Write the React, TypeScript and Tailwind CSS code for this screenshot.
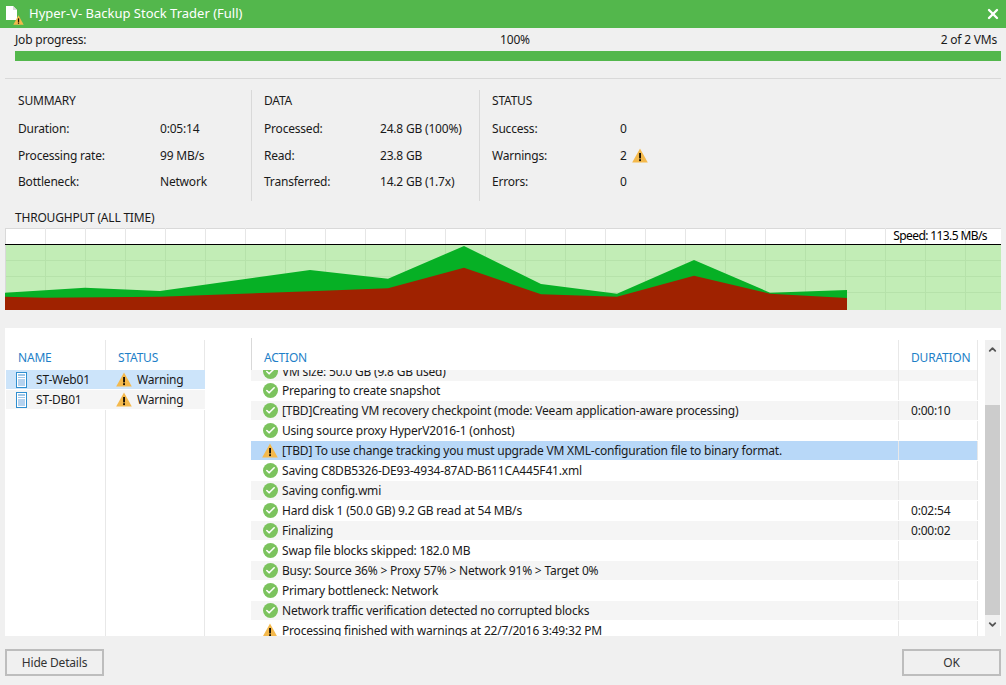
import { Check, ChevronDown, ChevronUp, X } from 'lucide-react';

const WarnIcon = ({ className = 'w-4 h-4' }: { className?: string }) => (
  <svg viewBox="0 0 16 15" className={className}>
    <path d="M8 0.5 L15.8 14.5 H0.2 Z" fill="#f4b94c" />
    <rect x="7.1" y="5" width="1.9" height="5.4" fill="#1a1205" />
    <rect x="7.1" y="11.2" width="1.9" height="1.9" fill="#1a1205" />
  </svg>
);

const OkIcon = () => (
  <span className="w-[15px] h-[15px] rounded-full bg-[#7cc35e] flex items-center justify-center shrink-0">
    <Check className="w-[11px] h-[11px] text-white" strokeWidth={3.5} />
  </span>
);

const VmIcon = () => (
  <svg viewBox="0 0 11 16" className="w-[11px] h-4 shrink-0">
    <rect x="0.5" y="0.5" width="10" height="15" fill="#fff" stroke="#2f8fd0" />
    <rect x="2" y="2" width="7" height="2" fill="#9fc6e8" />
    <rect x="2" y="5" width="7" height="1" fill="#9fc6e8" />
    <rect x="2" y="7" width="7" height="7" fill="#b5d2ee" />
  </svg>
);

const sections = [
  {
    title: 'SUMMARY',
    className: 'w-[246px] pl-[13px]',
    valueClass: 'w-[142px]',
    rows: [
      ['Duration:', '0:05:14'],
      ['Processing rate:', '99 MB/s'],
      ['Bottleneck:', 'Network'],
    ],
  },
  {
    title: 'DATA',
    className: 'w-[228px] pl-3 border-l border-[#d9d9d9]',
    valueClass: 'w-[116px]',
    rows: [
      ['Processed:', '24.8 GB (100%)'],
      ['Read:', '23.8 GB'],
      ['Transferred:', '14.2 GB (1.7x)'],
    ],
  },
  {
    title: 'STATUS',
    className: 'w-[228px] pl-3 border-l border-[#d9d9d9]',
    valueClass: 'w-[128px]',
    rows: [
      ['Success:', '0'],
      ['Warnings:', '2'],
      ['Errors:', '0'],
    ],
  },
];

const actions = [
  { text: 'VM size: 50.0 GB (9.8 GB used)', time: '', kind: 'ok', bg: 'bg-[#f5f5f5]' },
  { text: 'Preparing to create snapshot', time: '', kind: 'ok', bg: 'bg-white' },
  { text: '[TBD]Creating VM recovery checkpoint (mode: Veeam application-aware processing)', time: '0:00:10', kind: 'ok', bg: 'bg-[#f5f5f5]' },
  { text: 'Using source proxy HyperV2016-1 (onhost)', time: '', kind: 'ok', bg: 'bg-white' },
  { text: '[TBD] To use change tracking you must upgrade VM XML-configuration file to binary format.', time: '', kind: 'warn', bg: 'bg-[#b8d8f8]' },
  { text: 'Saving C8DB5326-DE93-4934-87AD-B611CA445F41.xml', time: '', kind: 'ok', bg: 'bg-white' },
  { text: 'Saving config.wmi', time: '', kind: 'ok', bg: 'bg-[#f5f5f5]' },
  { text: 'Hard disk 1 (50.0 GB) 9.2 GB read at 54 MB/s', time: '0:02:54', kind: 'ok', bg: 'bg-white' },
  { text: 'Finalizing', time: '0:00:02', kind: 'ok', bg: 'bg-[#f5f5f5]' },
  { text: 'Swap file blocks skipped: 182.0 MB', time: '', kind: 'ok', bg: 'bg-white' },
  { text: 'Busy: Source 36% > Proxy 57% > Network 91% > Target 0%', time: '', kind: 'ok', bg: 'bg-[#f5f5f5]' },
  { text: 'Primary bottleneck: Network', time: '', kind: 'ok', bg: 'bg-white' },
  { text: 'Network traffic verification detected no corrupted blocks', time: '', kind: 'ok', bg: 'bg-[#f5f5f5]' },
  { text: 'Processing finished with warnings at 22/7/2016 3:49:32 PM', time: '', kind: 'warn', bg: 'bg-white' },
];

const vLines = Array.from({ length: 24 }, (_, i) => 40 * (i + 1));

// chart coords are relative to the chart box (x - 5, y - 228)
const greenPts = '0,82 0,64.7 80,59.7 155,63 305,42 383,50.7 459,18 536,56 612,65.7 689,32 765,64.7 842,62 842,82';
const redPts = '0,82 0,68.7 40,69.7 155,68.7 305,63.3 383,60.3 459,39.7 536,66.3 612,68.7 689,47.7 765,65.7 842,70 842,82';

function Chart() {
  return (
    <div className="relative mx-[5px] h-[82px] bg-white">
      <svg viewBox="0 0 996 82" className="block w-[996px] h-[82px]">
        <rect x="0" y="16" width="996" height="66" fill="#c2edb6" />
        <rect x="0" y="0" width="996" height="1" fill="#d9d9d9" />
        {vLines.map((x) => (
          <g key={x}>
            <rect x={x} y="0" width="1" height="16" fill="#e6e6e6" />
            <rect x={x} y="16" width="1" height="66" fill="#b6e2aa" />
          </g>
        ))}
        {[32, 48, 64].map((y) => (
          <rect key={y} x="0" y={y} width="996" height="1" fill="#b6e2aa" />
        ))}
        <rect x="0" y="0" width="1" height="82" fill="#d9d9d9" />
        <polygon points={greenPts} fill="#06b025" />
        <polygon points={redPts} fill="#9f2200" />
        <rect x="0" y="16" width="996" height="1" fill="#000" />
      </svg>
      <span className="absolute right-[14px] top-0 h-4 leading-[16px] tracking-[-0.6px] text-black">Speed: 113.5 MB/s</span>
    </div>
  );
}

export default function App() {
  return (
    <div className="w-[1006px] h-[685px] overflow-hidden bg-[#f0f0f0] text-[#1a1a1a] text-[12px] tracking-[-0.2px] font-['Noto_Sans',sans-serif] flex flex-col">
      {/* Title bar */}
      <div className="h-7 bg-[#53b74c] flex items-center pl-[6px] pr-[5px] text-white shrink-0">
        <div className="relative w-[16px] h-[16px] mr-[7px]">
          <svg viewBox="0 0 11 14" className="w-[11px] h-[14px]">
            <path d="M0 0 H7 L11 4 V14 H0 Z" fill="#fff" />
            <path d="M7 0 V4 H11" fill="#d8d8d8" />
          </svg>
          <WarnIcon className="absolute -right-[2px] bottom-[-3px] w-[11px] h-[10px]" />
        </div>
        <span className="text-[13px] tracking-normal">Hyper-V- Backup Stock Trader (Full)</span>
        <X className="ml-auto w-4 h-4 text-white" strokeWidth={3.5} />
      </div>

      {/* Job progress */}
      <div className="grid grid-cols-3 h-[23px] items-center pl-[15px] pr-[9px]">
        <span>Job progress:</span>
        <span className="text-center pl-[18px]">100%</span>
        <span className="text-right">2 of 2 VMs</span>
      </div>
      <div className="h-[10px] ml-[15px] mr-[5px] bg-[#53b74c]" />
      <div className="h-px mt-[17px] ml-[5px] mr-[5px] bg-[#d9d9d9]" />

      {/* Summary */}
      <div className="flex mt-[11px] ml-[5px] h-[111px]">
        {sections.map((s) => (
          <div key={s.title} className={s.className}>
            <div className="h-[22px] leading-[22px]">{s.title}</div>
            <div className="mt-[7px] flex flex-col gap-[6.5px]">
              {s.rows.map(([label, value]) => (
                <div key={label} className="flex h-5 items-center">
                  <span className={s.valueClass}>{label}</span>
                  <span>{value}</span>
                  {label === 'Warnings:' && <WarnIcon className="ml-[5px] w-4 h-[15px]" />}
                </div>
              ))}
            </div>
          </div>
        ))}
      </div>

      {/* Throughput */}
      <div className="mt-[7px] h-5 leading-5 pl-[15px]">THROUGHPUT (ALL TIME)</div>
      <Chart />

      {/* Details */}
      <div className="mt-[18px] mx-[5px] h-[308px] bg-white pt-3 flex shrink-0">
        <div className="w-[200px] shrink-0 flex flex-col">
          <div className="flex h-[30px] text-[#1e7fc8] shrink-0">
            <div className="w-[100px] pl-[13px] pt-[9px]">NAME</div>
            <div className="w-[100px] pl-3 pt-[9px] border-x border-[#e8e8e8]">STATUS</div>
          </div>
          <div className="flex-1 flex flex-col">
            {[
              { name: 'ST-Web01', bg: 'bg-[#cce4fa]' },
              { name: 'ST-DB01', bg: 'bg-[#f5f5f5]' },
            ].map((r) => (
              <div key={r.name} className="flex h-5 shrink-0">
                <div className={`w-[100px] h-[19px] ml-px flex items-center pl-[10px] gap-[9px] ${r.bg}`}>
                  <VmIcon />
                  <span>{r.name}</span>
                </div>
                <div className={`w-[99px] h-[19px] flex items-center pl-[10px] gap-[5px] ${r.bg}`}>
                  <WarnIcon className="w-4 h-[15px]" />
                  <span>Warning</span>
                </div>
              </div>
            ))}
            <div className="flex flex-1">
              <div className="w-[100px]" />
              <div className="w-[100px] border-x border-[#e8e8e8]" />
            </div>
          </div>
        </div>

        <div className="ml-[46px] w-[727px] shrink-0 flex flex-col">
          <div className="flex h-[30px] text-[#1e7fc8] shrink-0 -mt-[2px] pt-[2px] border-l border-[#d9d9d9] box-content">
            <div className="w-[646px] pl-3 pt-[9px]">ACTION</div>
            <div className="w-[80px] pl-3 pt-[9px] border-x border-[#e8e8e8]">DURATION</div>
          </div>
          <div className="flex-1 overflow-hidden">
            {actions.map((a, i) => (
              <div key={i} className={`flex ${i === 0 ? 'h-[11px] items-end' : 'h-5'}`}>
                <div className={`w-[647px] h-[19px] flex items-center gap-[4px] whitespace-nowrap shrink-0 ${a.kind === 'ok' ? 'pl-3' : 'pl-[11px]'} ${a.bg}`}>
                  {a.kind === 'ok' ? <OkIcon /> : <WarnIcon className="w-4 h-[15px] shrink-0" />}
                  <span>{a.text}</span>
                </div>
                <div className={`w-[80px] h-[19px] flex items-center pl-3 border-x border-[#e8e8e8] ${a.bg}`}>{a.time}</div>
              </div>
            ))}
          </div>
        </div>

        {/* Scrollbar */}
        <div className="ml-[7px] w-[15px] bg-[#f0f0f0] flex flex-col items-center justify-between shrink-0">
          <div className="h-[65px] flex items-start pt-[4px]">
            <ChevronUp className="w-[11px] h-[11px] text-[#555]" strokeWidth={4} />
          </div>
          <div className="w-full h-[210px] bg-[#cccccc]" />
          <div className="h-[21px] flex items-center pb-[2px]">
            <ChevronDown className="w-[11px] h-[11px] text-[#555]" strokeWidth={4} />
          </div>
        </div>
      </div>

      {/* Footer */}
      <div className="flex justify-between mt-[13px] mx-[5px]">
        <button className="w-[99px] h-[27px] border-2 border-[#bdbdbd] text-[#333] flex items-center justify-center">Hide Details</button>
        <button className="w-[99px] h-[27px] border-2 border-[#bdbdbd] text-[#333] flex items-center justify-center">OK</button>
      </div>
    </div>
  );
}
